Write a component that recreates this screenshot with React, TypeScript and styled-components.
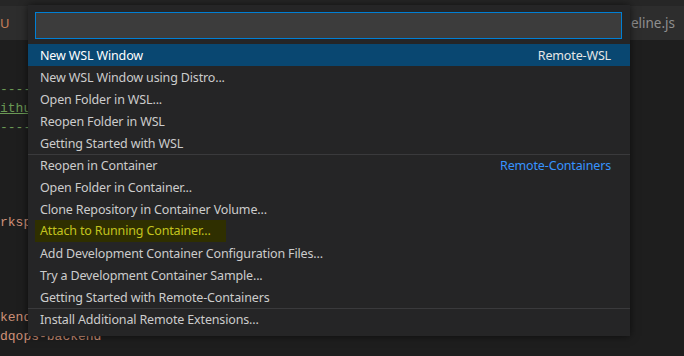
import styled, { createGlobalStyle } from "styled-components";

const GlobalStyle = createGlobalStyle`
  html, body {
    margin: 0;
    padding: 0;
    background: #1e1e1e;
  }
`;

type CodeLine = {
  text: string;
  color?: string;
  link?: boolean;
};

// only the part of each line left of the quick pick is visible
const codeLines: CodeLine[] = [
  { text: "" },
  { text: "" },
  { text: "----", color: "#6a9955" },
  { text: "ithu", color: "#6a9955", link: true },
  { text: "----", color: "#6a9955" },
  { text: "" },
  { text: "" },
  { text: "" },
  { text: "" },
  { text: "rksp", color: "#ce9178" },
  { text: "" },
  { text: "" },
  { text: "" },
  { text: "" },
  { text: "kend", color: "#ce9178" },
  { text: "dqops-backend", color: "#ce9178" },
];

type Item = {
  label: string;
  detail?: string;
  detailColor?: string;
  separator?: boolean;
  active?: boolean;
  marked?: boolean;
};

const items: Item[] = [
  { label: "New WSL Window", detail: "Remote-WSL", active: true },
  { label: "New WSL Window using Distro..." },
  { label: "Open Folder in WSL..." },
  { label: "Reopen Folder in WSL" },
  { label: "Getting Started with WSL" },
  { label: "Reopen in Container", detail: "Remote-Containers", detailColor: "#3794ff", separator: true },
  { label: "Open Folder in Container..." },
  { label: "Clone Repository in Container Volume..." },
  { label: "Attach to Running Container...", marked: true },
  { label: "Add Development Container Configuration Files..." },
  { label: "Try a Development Container Sample..." },
  { label: "Getting Started with Remote-Containers" },
  { label: "Install Additional Remote Extensions...", separator: true },
];

export default function App() {
  return (
    <Workbench>
      <GlobalStyle />
      <TabBar>
        <Tab>U</Tab>
        <Tab $muted>neline.js</Tab>
      </TabBar>
      <Editor>
        {codeLines.map((line, i) => (
          <Line key={i} $color={line.color} $link={line.link}>
            {line.text || "\u00a0"}
          </Line>
        ))}
      </Editor>

      <QuickPick>
        <InputBox />
        <List>
          {items.map((item) => (
            <Row key={item.label} $active={item.active} $separator={item.separator}>
              <Label $marked={item.marked}>{item.label}</Label>
              {item.detail && (
                <Detail $color={item.active ? "#e6e6e6" : item.detailColor}>{item.detail}</Detail>
              )}
            </Row>
          ))}
        </List>
      </QuickPick>
    </Workbench>
  );
}

const Workbench = styled.div`
  position: relative;
  width: 684px;
  height: 356px;
  overflow: hidden;
  background: #1e1e1e;
  font-family: "Noto Sans", "Open Sans", sans-serif;
`;

const TabBar = styled.div`
  display: flex;
  justify-content: space-between;
  align-items: center;
  height: 34px;
  border-top: 6px solid #262626;
  background: #2d2d2d;
`;

const Tab = styled.div<{ $muted?: boolean }>`
  font-size: ${(p) => (p.$muted ? "13.5px" : "13px")};
  color: ${(p) => (p.$muted ? "#8f8f8f" : "#c8805a")};
  padding: ${(p) => (p.$muted ? "0 9px 0 0" : "0")};
  margin-top: -1px;
`;

const Editor = styled.div`
  padding-top: 2px;
  font-family: "Liberation Mono", "DejaVu Sans Mono", monospace;
  font-size: 13px;
`;

const Line = styled.div<{ $color?: string; $link?: boolean }>`
  height: 19px;
  line-height: 19px;
  white-space: pre;
  color: ${(p) => p.$color ?? "#d4d4d4"};
  text-decoration: ${(p) => (p.$link ? "underline" : "none")};
`;

const QuickPick = styled.div`
  position: absolute;
  left: 28px;
  top: 5px;
  width: 602px;
  padding: 7px 0 6px;
  background: #252526;
  box-shadow: 0 0 8px rgba(0, 0, 0, 0.6);
`;

const InputBox = styled.div`
  margin: 0 8px 0 7px;
  height: 25px;
  background: #3c3c3c;
  border: 1px solid #007fd4;
`;

const List = styled.div`
  margin-top: 5px;
`;

const Row = styled.div<{ $active?: boolean; $separator?: boolean }>`
  display: flex;
  justify-content: space-between;
  align-items: center;
  height: 22px;
  padding: 0 19px 0 12px;
  box-sizing: border-box;
  font-size: 12.5px;
  letter-spacing: -0.15px;
  color: ${(p) => (p.$active ? "#ffffff" : "#cccccc")};
  background: ${(p) => (p.$active ? "#094771" : "transparent")};
  box-shadow: ${(p) => (p.$separator ? "inset 0 1px 0 #3a3a3c" : "none")};
`;

const Label = styled.span<{ $marked?: boolean }>`
  margin-left: ${(p) => (p.$marked ? "-5px" : "0")};
  padding: ${(p) => (p.$marked ? "2px 15px 3px 5px" : "0")};
  color: ${(p) => (p.$marked ? "#c3c31e" : "inherit")};
  background: ${(p) => (p.$marked ? "#2f2f00" : "transparent")};
`;

const Detail = styled.span<{ $color?: string }>`
  color: ${(p) => p.$color ?? "#cccccc"};
`;
